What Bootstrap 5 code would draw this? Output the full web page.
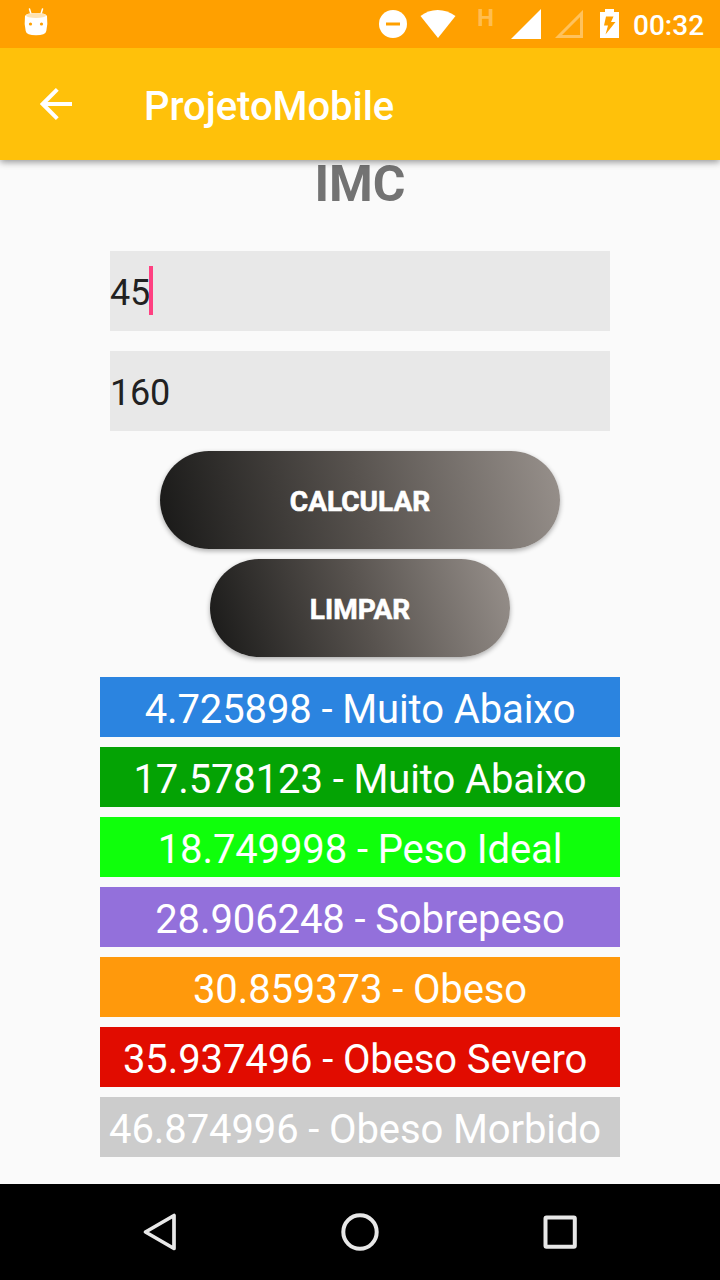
<!DOCTYPE html>
<html lang="pt-BR">
<head>
<meta charset="utf-8">
<meta name="viewport" content="width=device-width, initial-scale=1">
<title>ProjetoMobile</title>
<link href="https://cdn.jsdelivr.net/npm/bootstrap@5.3.0/dist/css/bootstrap.min.css" rel="stylesheet">
<style>
  body { font-family: Roboto, "Noto Sans", sans-serif; background: #fafafa; }
  svg { display: block; flex: none; }
  .screen { height: 1280px; width: 720px; }
  .status-bar { height: 48px; background: #ffa000; z-index: 2; }
  .clock { font-size: 28px; font-weight: 500; line-height: 46px; width: 72px; padding-top: 4px; }
  .sim-label { font-size: 24px; font-weight: 700; line-height: 24px; width: 18px; height: 36px; color: rgba(255,255,255,.33); }
  .app-bar { height: 112px; background: #ffc10a; box-shadow: 0 2px 7px rgba(0,0,0,.42); z-index: 1; }
  .app-title { font-size: 40px; font-weight: 500; line-height: 48px; margin-left: 72px; padding-top: 6px; letter-spacing: -.05px; }
  .heading { font-size: 50px; font-weight: 700; line-height: 58px; color: #737373; margin-top: -5px; margin-bottom: 38px; }
  .field { width: 500px; height: 80px; background: #e8e8e8; color: #212121; font-size: 36px; margin-bottom: 20px; line-height: 42px; letter-spacing: -.2px; }
  .field span { padding-top: 4px; }
  .caret { width: 4px; height: 49px; background: #ff4081; margin-left: -1px; margin-bottom: 1px; }
  .pill { height: 98px; border: 0; border-radius: 49px; font-size: 28px; font-weight: 700; -webkit-text-stroke: .6px #fff; padding: 3px 0 0; box-shadow: 0 2px 5px rgba(0,0,0,.32); margin-bottom: 10px; }
  .pill-wide { width: 400px; background: linear-gradient(76.2deg, #181817, #57524e 50%, #98918c); }
  .pill-slim { width: 300px; background: linear-gradient(71.9deg, #181817, #57524e 50%, #98918c); }
  .results { width: 520px; gap: 10px; margin-top: 10px; }
  .result { height: 60px; font-size: 40px; line-height: 60px; padding-top: 3px; white-space: pre; letter-spacing: -.11px; }
  .nav-keys { height: 96px; gap: 160px; }
</style>
</head>
<body>
<div class="screen d-flex flex-column overflow-hidden">
  <header class="status-bar d-flex align-items-center text-white position-relative flex-shrink-0">
    <svg width="26" height="28" viewBox="0 0 26 28" style="margin-left:23px;margin-top:-4px">
      <path d="M6.5 1 8 6M19.5 1 18 6" stroke="#fff" stroke-width="1.5" stroke-linecap="round"/>
      <path d="M2 8Q3 5 13 5T24 8Q25 16 23.3 23Q22.5 27.3 13 27.3T2.700 23Q1 16 2 8Z" fill="#fff"/>
      <ellipse cx="13" cy="7.500" rx="10" ry="2.500" fill="#ffe3b3"/>
      <circle cx="7.500" cy="16" r="1.600" fill="#ffa000"/><circle cx="18.500" cy="16" r="1.600" fill="#ffa000"/>
    </svg>
    <div class="d-flex align-items-center ms-auto">
      <svg width="28" height="28" viewBox="0 0 28 28"><circle cx="14" cy="14" r="14" fill="#fff"/><path d="M7 14H21" stroke="#ffa000" stroke-width="3"/></svg>
      <svg width="36" height="28" viewBox="0 0 36 28" style="margin-left:13px"><path d="M.5 6Q8 0 17.700 0T35.500 6L18 28Z" fill="#fff"/></svg>
      <span class="sim-label" style="margin-left:21px">H</span>
      <svg width="30" height="30" viewBox="0 0 30 30" style="margin-left:16px"><path d="M0 30 30 0V30Z" fill="#fff"/></svg>
      <svg width="28" height="28" viewBox="0 0 28 28" style="margin-left:14px"><path d="M3.500 26.500 26.500 3.500V26.500Z" fill="none" stroke="#ffc25c" stroke-width="3"/></svg>
      <svg width="19" height="29" viewBox="0 0 19 29" style="margin-left:17px;margin-top:-1px"><path d="M0 3H5V0H14V3H19V29H0Z" fill="#fff"/><path d="M6 7.500H13.500L11 13H15.500L5.500 25.500 8 16.500H4Z" fill="#ffa000"/></svg>
      <span class="clock" style="margin-left:14px;margin-right:15px">00:32</span>
    </div>
  </header>

  <nav class="app-bar d-flex align-items-center text-white position-relative flex-shrink-0">
    <svg width="32" height="32" viewBox="0 0 32 32" style="margin-left:40px"><path d="M17.300 1.400 2.700 16 17.300 30.600M2.700 16H32" fill="none" stroke="#fff" stroke-width="4"/></svg>
    <span class="app-title">ProjetoMobile</span>
  </nav>

  <main class="d-flex flex-column align-items-center flex-grow-1">
    <h1 class="heading">IMC</h1>
    <div class="field d-flex align-items-center"><span>45</span><i class="caret"></i></div>
    <div class="field d-flex align-items-center"><span>160</span></div>
    <button class="btn pill pill-wide text-white">CALCULAR</button>
    <button class="btn pill pill-slim text-white">LIMPAR</button>
    <div class="results d-flex flex-column text-center text-white">
      <div class="result" style="background:#2b84e0">4.725898 - Muito Abaixo</div>
      <div class="result" style="background:#04a304">17.578123 - Muito Abaixo</div>
      <div class="result" style="background:#0fff0b">18.749998 - Peso Ideal</div>
      <div class="result" style="background:#9370db">28.906248 - Sobrepeso</div>
      <div class="result" style="background:#ff990c">30.859373 - Obeso</div>
      <div class="result" style="background:#e10c00">35.937496 - Obeso Severo </div>
      <div class="result" style="background:#cccccc">46.874996 - Obeso Morbido </div>
    </div>
  </main>

  <footer class="nav-keys bg-black d-flex align-items-center justify-content-center flex-shrink-0">
    <svg width="40" height="40" viewBox="0 0 40 40"><path d="M5.500 20 34 3.500V36.500Z" fill="none" stroke="#e8e8e8" stroke-width="3.700" stroke-linejoin="round"/></svg>
    <svg width="40" height="40" viewBox="0 0 40 40"><circle cx="20" cy="20" r="16.700" fill="none" stroke="#e8e8e8" stroke-width="4"/></svg>
    <svg width="40" height="40" viewBox="0 0 40 40"><rect x="5.500" y="5.500" width="29.300" height="29.300" rx="1" fill="none" stroke="#e8e8e8" stroke-width="4"/></svg>
  </footer>
</div>
<script src="https://cdn.jsdelivr.net/npm/bootstrap@5.3.0/dist/js/bootstrap.bundle.min.js"></script>
</body>
</html>
